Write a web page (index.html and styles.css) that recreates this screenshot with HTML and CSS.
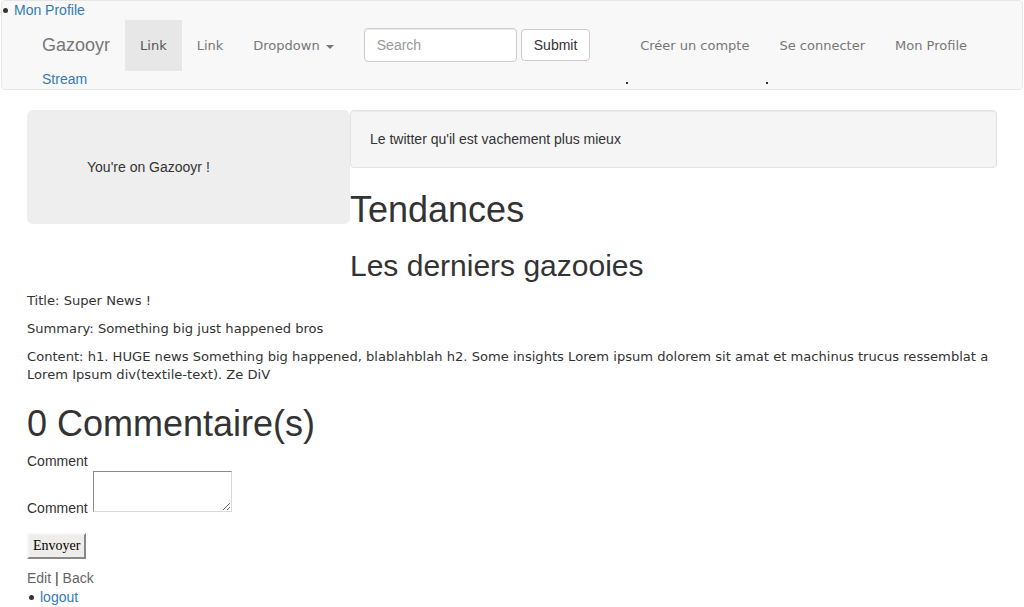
FILE: index.html
```html
<!DOCTYPE html>
<html lang="fr">
<head>
<meta charset="utf-8">
<title>Gazooyr</title>
<link rel="stylesheet" href="styles.css">
</head>
<body>
<nav class="navbar">
  <ul class="top-list"><li><a href="#" class="blue">Mon Profile</a></li></ul>
  <div class="nav-row">
    <a href="#" class="brand">Gazooyr</a>
    <ul class="nav">
      <li class="active"><a href="#">Link</a></li>
      <li><a href="#">Link</a></li>
      <li><a href="#">Dropdown <span class="caret"></span></a></li>
    </ul>
    <form class="nav-form">
      <input class="search" type="text" placeholder="Search">
      <button class="btn" type="button">Submit</button>
    </form>
    <ul class="nav nav-right">
      <li><a href="#">Créer un compte</a></li>
      <li><a href="#">Se connecter</a></li>
      <li><a href="#">Mon Profile</a></li>
    </ul>
  </div>
  <div class="stream-row">
    <a href="#" class="blue">Stream</a>
    <span class="dot dot-1"></span>
    <span class="dot dot-2"></span>
  </div>
</nav>

<main class="container">
  <div class="jumbotron">You're on Gazooyr !</div>
  <div class="well">Le twitter qu'il est vachement plus mieux</div>
  <h1 class="title-trend">Tendances</h1>
  <h2>Les derniers gazooies</h2>
  <p class="post">Title: Super News !</p>
  <p class="post">Summary: Something big just happened bros</p>
  <p class="post">Content: h1. HUGE news Something big happened, blablahblah h2. Some insights Lorem ipsum dolorem sit amat et machinus trucus ressemblat a Lorem Ipsum div(textile-text). Ze DiV</p>
  <h1 class="title-comments">0 Commentaire(s)</h1>
  <form class="comment-form">
    <div class="label-line">Comment</div>
    <div class="field-row">
      <label class="label-line" for="c">Comment</label>
      <textarea id="c" class="comment-box"></textarea>
    </div>
    <div class="submit-row"><button type="button" class="send">Envoyer</button></div>
  </form>
  <div class="links"><a href="#" class="grey">Edit</a> | <a href="#" class="grey">Back</a></div>
  <ul class="bottom-list"><li><a href="#" class="blue">logout</a></li></ul>
</main>
</body>
</html>
```

FILE: styles.css
```css
* { box-sizing: border-box; }

html, body {
  margin: 0;
  padding: 0;
  background: #fff;
}

body {
  font-family: "Liberation Sans", Arial, sans-serif;
  font-size: 14px;
  line-height: 20px;
  color: #333;
}

a { text-decoration: none; }
.blue { color: #337ab7; }
.grey { color: #666; }

ul { margin: 0; padding: 0; list-style: none; }

/* ---------- navbar ---------- */
.navbar {
  margin: 0 1px;
  background: #f8f8f8;
  border: 1px solid #e7e7e7;
  border-radius: 4px;
}

.top-list {
  padding-left: 12px;
  line-height: 19px;
}

.top-list li,
.bottom-list li {
  display: flex;
  align-items: center;
}

.top-list li::before,
.bottom-list li::before {
  content: "";
  width: 5px;
  height: 5px;
  border-radius: 50%;
  background: #333;
}

.top-list li::before { margin-left: -11px; margin-right: 6px; }

.nav-row {
  width: 970px;
  margin: 0 auto;
  padding-right: 15px;
  height: 50px;
  display: flex;
  align-items: stretch;
}

.brand {
  padding: 0 15px;
  font-size: 18px;
  line-height: 51px;
  color: #777;
}

.nav {
  display: flex;
}

.nav li a {
  display: block;
  padding: 0 15px;
  line-height: 51px;
  font-family: "DejaVu Sans", Verdana, sans-serif;
  font-size: 13px;
  color: #777;
}

.nav li.active a {
  background: #e7e7e7;
  color: #555;
}

.caret {
  display: inline-block;
  width: 0;
  height: 0;
  margin-left: 2px;
  vertical-align: middle;
  border-top: 4px solid #777;
  border-left: 4px solid transparent;
  border-right: 4px solid transparent;
}

.nav-form {
  display: flex;
  align-items: center;
  gap: 4px;
  padding: 0 15px;
}

.search {
  width: 153px;
  height: 34px;
  padding: 6px 12px;
  border: 1px solid #ccc;
  border-radius: 4px;
  background: #fff;
  box-shadow: inset 0 1px 1px rgba(0,0,0,.075);
  font-family: "Liberation Sans", Arial, sans-serif;
  font-size: 14px;
  color: #555;
  margin: 0;
}

.search::placeholder { color: #999; }

.btn {
  height: 32px;
  padding: 0 12px;
  border: 1px solid #ccc;
  border-radius: 4px;
  background: #fff;
  font-family: "Liberation Sans", Arial, sans-serif;
  font-size: 14px;
  color: #333;
  margin: 0;
}

.nav-right { margin-left: auto; }

.stream-row {
  position: relative;
  width: 970px;
  margin: 0 auto;
  padding-left: 15px;
  line-height: 19px;
}

.dot {
  position: absolute;
  top: 12px;
  width: 2px;
  height: 2px;
  background: #333;
}

.dot-1 { left: 599px; }
.dot-2 { left: 739px; }

/* ---------- content ---------- */
.container {
  width: 970px;
  margin: 20px auto 0;
}

.jumbotron {
  float: left;
  width: 323px;
  padding: 48px 60px;
  margin-bottom: 30px;
  background: #eee;
  border-radius: 6px;
  line-height: 18px;
  font-size: 14px;
}

.well {
  display: flow-root;
  padding: 19px;
  margin-bottom: 20px;
  background: #f5f5f5;
  border: 1px solid #e3e3e3;
  border-radius: 4px;
  box-shadow: inset 0 1px 1px rgba(0,0,0,.05);
  line-height: 18px;
  font-size: 14px;
}

h1, h2 {
  font-family: "Liberation Sans", Arial, sans-serif;
  font-weight: 500;
  line-height: 1.1;
  color: #333;
}

h1 { font-size: 36px; }
h2 { font-size: 30px; margin: 19px 0 10px; }

.title-trend { margin: 20px 0 8px; padding-top: 2px; }
.title-comments { margin: 20px 0 9px; }

.post {
  clear: left;
  margin: 0 0 10px;
  font-family: "DejaVu Sans", Verdana, sans-serif;
  font-size: 13.1px;
  line-height: 18px;
}

.comment-form { margin: 0; }

.label-line {
  line-height: 18px;
}

.field-row {
  display: flex;
  align-items: flex-end;
  gap: 5px;
}

.comment-box {
  width: 139px;
  height: 41px;
  margin: 1px 0 5px;
  padding: 2px;
  border: 1px solid;
  border-color: #8a8a8a #d8d8d8 #d8d8d8 #8a8a8a;
  background: #fff;
  resize: both;
  font-family: "Liberation Mono", monospace;
  font-size: 13px;
}

.submit-row {
  margin-top: 16px;
}

.send {
  height: 26px;
  padding: 0 4px;
  margin: 0;
  border: 2px solid;
  border-color: #f6f6f6 #888 #888 #f6f6f6;
  background: #efede9;
  font-family: "Liberation Serif", "Times New Roman", serif;
  font-size: 14px;
  color: #000;
}

.links {
  margin-top: 10px;
  line-height: 18px;
}

.bottom-list {
  line-height: 19px;
  padding-top: 1px;
  padding-left: 2px;
}

.bottom-list li::before { margin-right: 6px; }
```
